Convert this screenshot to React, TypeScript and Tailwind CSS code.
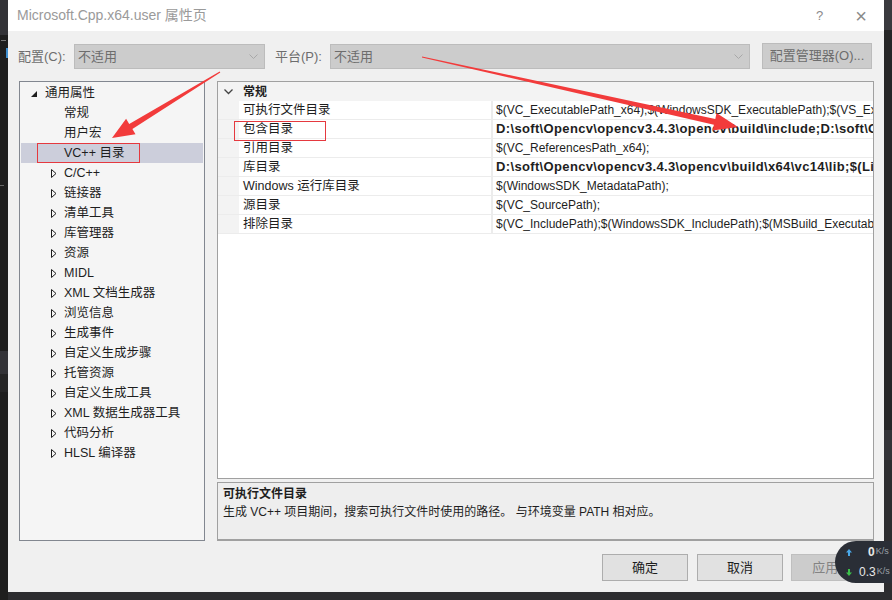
import React from 'react'

const font = { fontFamily: '"Liberation Sans", "Noto Sans CJK SC", sans-serif' }

const treeItems: { label: string; kind: 'open' | 'leaf' | 'closed'; selected?: boolean }[] = [
  { label: '通用属性', kind: 'open' },
  { label: '常规', kind: 'leaf' },
  { label: '用户宏', kind: 'leaf' },
  { label: 'VC++ 目录', kind: 'leaf', selected: true },
  { label: 'C/C++', kind: 'closed' },
  { label: '链接器', kind: 'closed' },
  { label: '清单工具', kind: 'closed' },
  { label: '库管理器', kind: 'closed' },
  { label: '资源', kind: 'closed' },
  { label: 'MIDL', kind: 'closed' },
  { label: 'XML 文档生成器', kind: 'closed' },
  { label: '浏览信息', kind: 'closed' },
  { label: '生成事件', kind: 'closed' },
  { label: '自定义生成步骤', kind: 'closed' },
  { label: '托管资源', kind: 'closed' },
  { label: '自定义生成工具', kind: 'closed' },
  { label: 'XML 数据生成器工具', kind: 'closed' },
  { label: '代码分析', kind: 'closed' },
  { label: 'HLSL 编译器', kind: 'closed' },
]

const rows: { name: string; value: string; bold?: boolean }[] = [
  { name: '可执行文件目录', value: '$(VC_ExecutablePath_x64);$(WindowsSDK_ExecutablePath);$(VS_ExecutablePath)' },
  { name: '包含目录', value: 'D:\\soft\\Opencv\\opencv3.4.3\\opencv\\build\\include;D:\\soft\\Opencv', bold: true },
  { name: '引用目录', value: '$(VC_ReferencesPath_x64);' },
  { name: '库目录', value: 'D:\\soft\\Opencv\\opencv3.4.3\\opencv\\build\\x64\\vc14\\lib;$(LibraryPath)', bold: true },
  { name: 'Windows 运行库目录', value: '$(WindowsSDK_MetadataPath);' },
  { name: '源目录', value: '$(VC_SourcePath);' },
  { name: '排除目录', value: '$(VC_IncludePath);$(WindowsSDK_IncludePath);$(MSBuild_ExecutablePath)' },
]

const Chevron = () => (
  <svg width="9" height="5" viewBox="0 0 9 5" className="mr-[6px]">
    <path d="M0.5 0.5 L4.5 4.5 L8.5 0.5" stroke="#a8a8a8" fill="none" />
  </svg>
)

const Dropdown = ({ w }: { w: string }) => (
  <div className={`${w} flex h-[25px] items-center justify-between border border-[#bcbcbc] bg-[#cccccc] pl-[3px]`}>
    <span className="text-[13px] text-[#6d6d6d]">不适用</span>
    <Chevron />
  </div>
)

const TreeRow = ({ item }: { item: (typeof treeItems)[number] }) => (
  <div
    className={`mx-[1px] flex h-[20px] items-center text-[12.5px] text-[#1e1e1e] ${item.selected ? 'bg-[#cccedb]' : ''}`}
  >
    {item.kind === 'open' && (
      <>
        <svg width="6" height="6" viewBox="0 0 6 6" className="ml-[10px] mt-[1px]">
          <polygon points="6,0 6,6 0,6" fill="#1e1e1e" />
        </svg>
        <span className="ml-[8px]">{item.label}</span>
      </>
    )}
    {item.kind === 'closed' && (
      <>
        <svg width="6" height="9" viewBox="0 0 6 9" className="ml-[30px]">
          <polygon points="0.5,0.5 5,4.5 0.5,8.5" fill="none" stroke="#1e1e1e" />
        </svg>
        <span className="ml-[7px]">{item.label}</span>
      </>
    )}
    {item.kind === 'leaf' && <span className="ml-[43px]">{item.label}</span>}
  </div>
)

const Arrows = () => (
  <svg width="892" height="600" className="pointer-events-none absolute left-0 top-0">
    <polygon
      points="220.3,72.4 132.4,129.1 135.5,134.2 112,138 126.1,118.8 129.2,123.9 219.7,71.6"
      fill="#f23b3b"
    />
    <polygon
      points="421.9,57.5 713.9,124.7 712.7,130.6 738,127 716.5,113 715.3,118.9 422.1,56.5"
      fill="#f23b3b"
    />
    <rect x="37.5" y="143.5" width="102" height="19" fill="none" stroke="#e5393f" />
    <rect x="234.5" y="121.5" width="91" height="19" fill="none" stroke="#e5393f" />
  </svg>
)

const NetWidget = () => (
  <div className="absolute left-[835px] top-[541px] flex h-[42px] w-[60px] flex-col justify-center gap-[2px] rounded-l-[21px] bg-[#2a2e36] pl-[10px]">
    <div className="flex items-center">
      <svg width="8" height="9" viewBox="0 0 8 9">
        <path d="M4 1 L7 4.5 H5 V8 H3 V4.5 H1 Z" fill="#4aa8e8" />
      </svg>
      <span className="ml-[15px] text-[12px] font-bold text-[#e8e8e8]">0</span>
      <span className="ml-[1px] text-[9px] text-[#9aa0a8]">K/s</span>
    </div>
    <div className="flex items-center">
      <svg width="8" height="9" viewBox="0 0 8 9">
        <path d="M4 8 L7 4.5 H5 V1 H3 V4.5 H1 Z" fill="#3cc04a" />
      </svg>
      <span className="ml-[6px] text-[12px] text-[#e8e8e8]">0.3</span>
      <span className="ml-[1px] text-[9px] text-[#9aa0a8]">K/s</span>
    </div>
  </div>
)

export default function App() {
  return (
    <div className="relative flex h-[600px] w-[892px] overflow-hidden bg-[#1e1e1e]" style={font}>
      {/* editor behind the dialog */}
      <div className="flex w-[8px] flex-col">
        <div className="h-[35px] bg-[#333337]" />
        <div className="h-[5px]" />
        <div className="ml-[1px] h-[8px] w-[5px] border-t border-[#777]" />
        <div className="ml-[6px] h-[10px] w-[2px] bg-[#3f8fd0]" />
        <div className="h-[120px]" />
        <div className="h-[8px] w-[4px] border-b border-[#666]" />
        <div className="h-[165px]" />
        <div className="h-[23px] bg-[#333337]" />
        <div className="h-[18px] bg-[#252526]" />
        <div className="flex-1 bg-[#1e1e1e]" />
      </div>

      <div className="flex w-[876px] flex-col">
        <div className="flex h-[592px] flex-col bg-[#f0f0f0]">
          {/* title bar */}
          <div className="flex h-[31px] items-center bg-white">
            <span className="ml-[9px] text-[14px] text-[#9a9a9a]">Microsoft.Cpp.x64.user 属性页</span>
            <span className="ml-auto text-[13px] text-[#8a8a8a]">?</span>
            <span className="ml-[32px] mr-[17px] text-[20px] font-light leading-none text-[#8a8a8a]">×</span>
          </div>

          {/* configuration row */}
          <div className="flex h-[50px] items-start pt-[13px]">
            <span className="ml-[10px] w-[56px] text-[13px] leading-[25px] text-[#6d6d6d]">配置(C):</span>
            <Dropdown w="w-[191px]" />
            <span className="ml-[10px] w-[55px] text-[13px] leading-[25px] text-[#6d6d6d]">平台(P):</span>
            <Dropdown w="w-[420px]" />
            <div className="ml-[12px] flex h-[26px] w-[110px] -translate-y-[1px] items-center justify-center border border-[#bcbcbc] bg-[#cccccc] text-[13px] text-[#6d6d6d]">
              配置管理器(O)...
            </div>
          </div>

          {/* main area */}
          <div className="flex pl-[11px]">
            <div className="h-[460px] w-[186px] border border-[#828790] bg-[#f5f5f5] pt-[1px]">
              {treeItems.map((it) => (
                <TreeRow key={it.label} item={it} />
              ))}
            </div>

            <div className="ml-[12px] flex w-[657px] flex-col">
              <div className="h-[398px] overflow-hidden border border-[#a0a0a0] bg-white">
                <div className="flex h-[19px] items-center bg-[#f3f3f3]">
                  <svg width="9" height="6" viewBox="0 0 9 6" className="ml-[6px]">
                    <path d="M0.5 0.5 L4.5 4.5 L8.5 0.5" stroke="#444" strokeWidth="1.3" fill="none" />
                  </svg>
                  <span className="ml-[10px] text-[12px] font-bold text-[#1e1e1e]">常规</span>
                </div>
                {rows.map((r) => (
                  <div key={r.name} className="flex h-[19px] border-b border-[#ececec] text-[12px] text-[#1e1e1e]">
                    <div className="w-[21px] bg-[#f3f3f3]" />
                    <div className="flex w-[252px] items-center pl-[4px] text-[12.5px]">{r.name}</div>
                    <div className="w-[2px] bg-[#ececec]" />
                    <div
                      className={`flex flex-1 items-center overflow-hidden whitespace-nowrap pl-[3px] ${r.bold ? 'text-[13px] font-bold tracking-[0.35px]' : ''}`}
                    >
                      {r.value}
                    </div>
                  </div>
                ))}
              </div>

              <div className="mt-[3px] h-[59px] border border-b-2 border-[#a0a0a0] bg-[#eeeeee] px-[5px] pt-[2px] text-[12px] text-[#1e1e1e]">
                <div className="font-bold leading-[18px]">可执行文件目录</div>
                <div className="leading-[18px]">生成 VC++ 项目期间，搜索可执行文件时使用的路径。 与环境变量 PATH 相对应。</div>
              </div>
            </div>
          </div>

          {/* buttons */}
          <div className="mt-[13px] flex justify-end pr-[7px]">
            <div className="flex h-[27px] w-[86px] items-center justify-center border border-[#adadad] bg-[#e1e1e1] text-[13px] text-[#1e1e1e]">确定</div>
            <div className="ml-[9px] flex h-[27px] w-[86px] items-center justify-center border border-[#adadad] bg-[#e1e1e1] text-[13px] text-[#1e1e1e]">取消</div>
            <div className="ml-[8px] flex h-[27px] w-[86px] items-center justify-center border border-[#bfbfbf] bg-[#cccccc] text-[13px] text-[#838383]">应用(A)</div>
          </div>
        </div>
        <div className="flex-1 bg-[#2d2d30]" />
      </div>

      <div className="flex w-[8px] flex-col bg-[#2d2d30]">
        <div className="h-[30px] bg-[#3a3a3e]" />
        <div className="h-[400px] bg-[#252526]" />
        <div className="h-[30px] bg-[#333337]" />
        <div className="flex-1 bg-[#2d2d30]" />
      </div>

      <Arrows />
      <NetWidget />
    </div>
  )
}
